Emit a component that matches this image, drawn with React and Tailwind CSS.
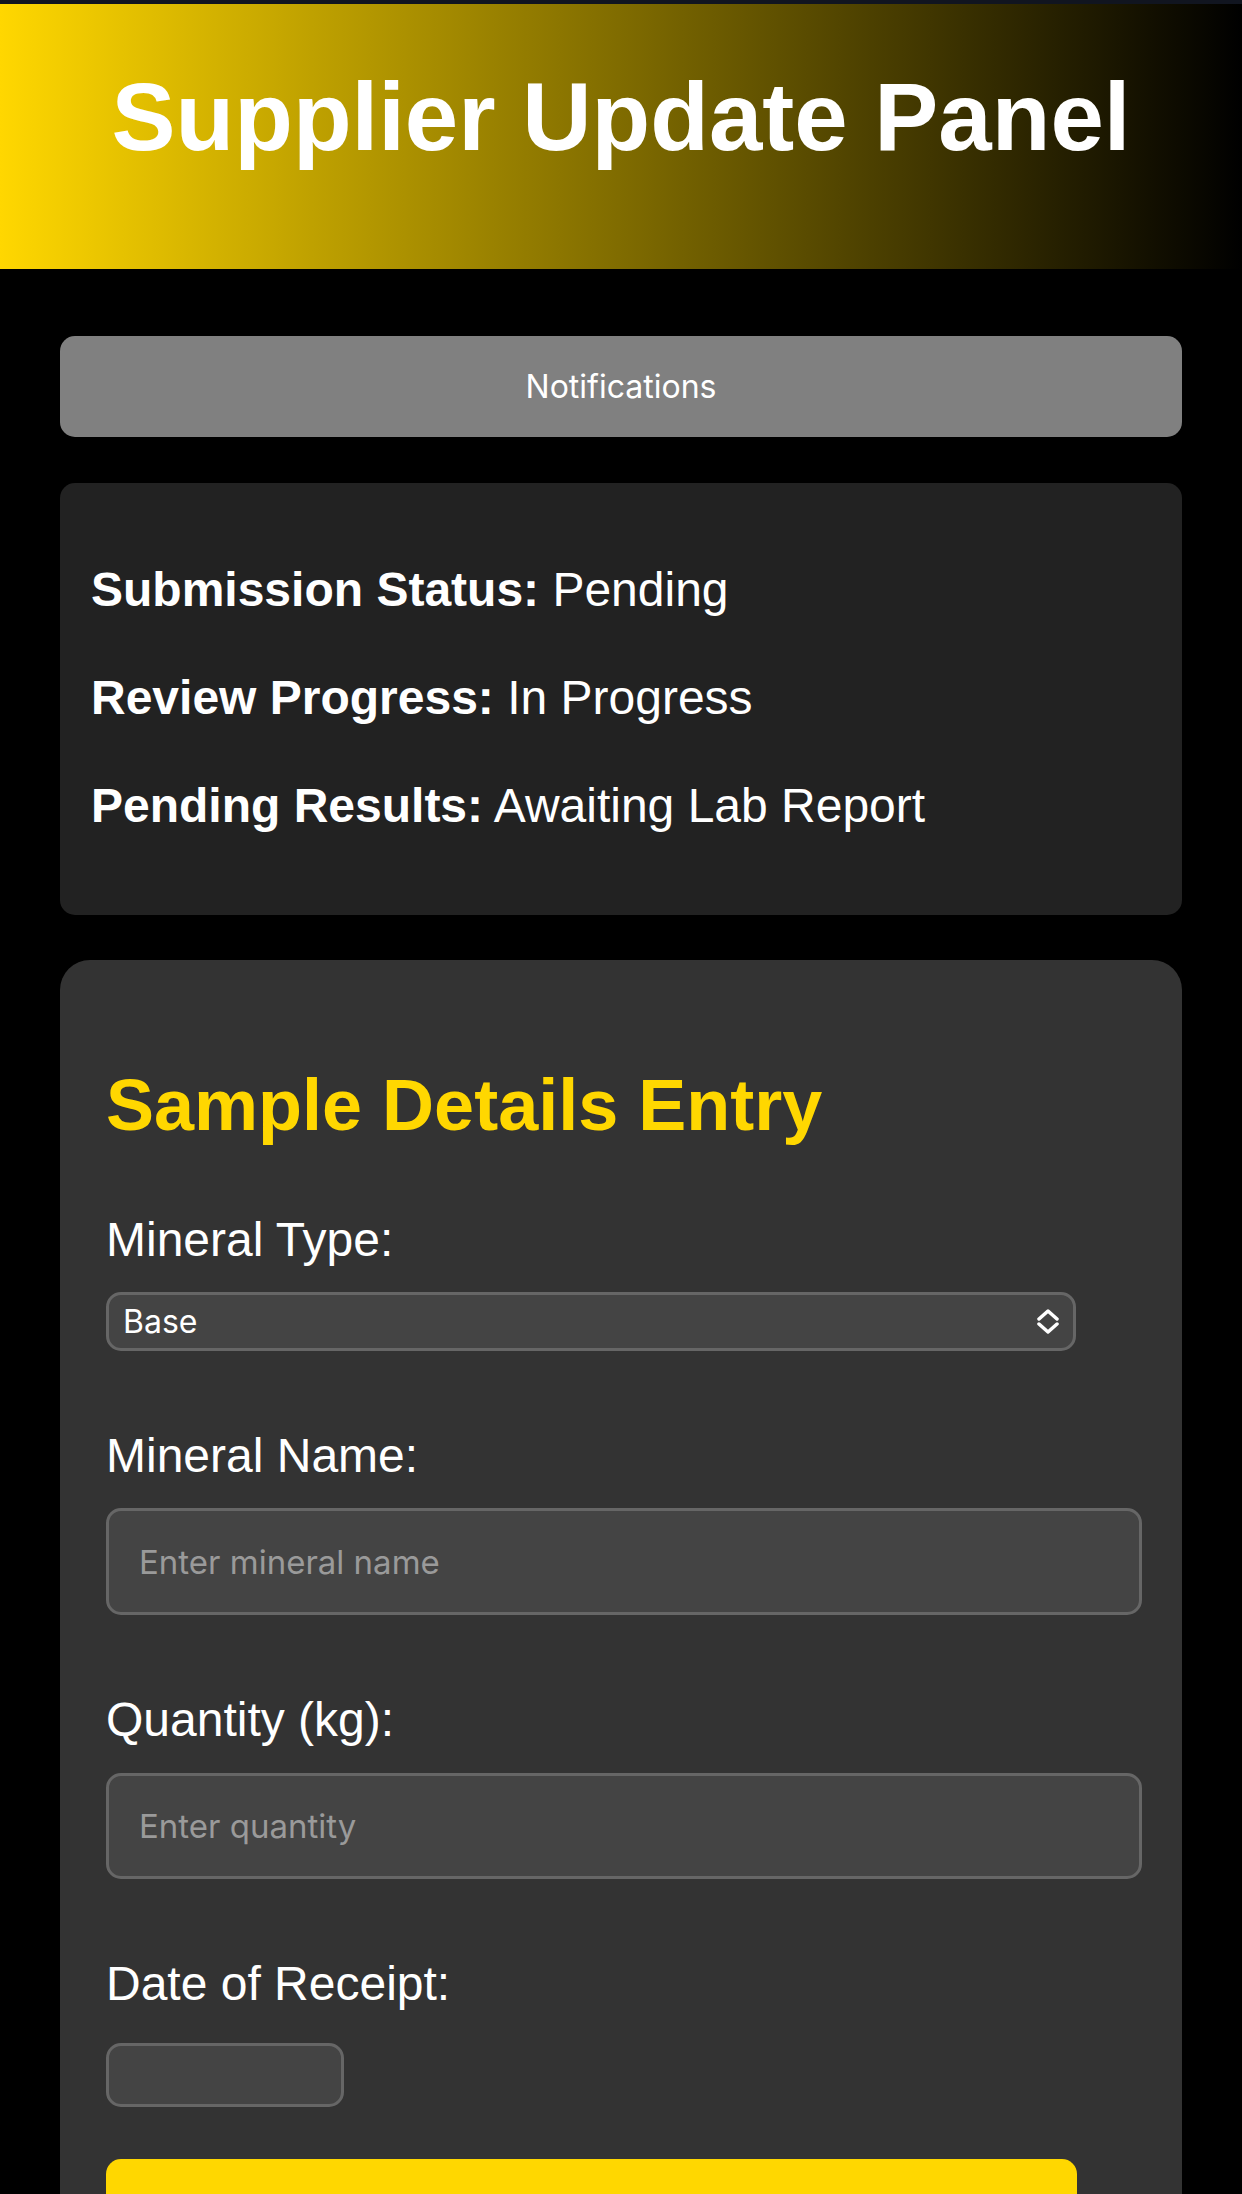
import { useState } from "react";

const arial = { fontFamily: '"Liberation Sans", Arial, sans-serif' };

function App() {
  const [type, setType] = useState("Base");
  const [name, setName] = useState("");
  const [qty, setQty] = useState("");

  return (
    <div
      className="min-h-screen bg-black text-white font-['Liberation_Sans',Arial,sans-serif]"
    >
      {/* top strip */}
      <div className="h-[4px] bg-[#111520]" />

      {/* HEADER */}
      <header className="bg-[linear-gradient(to_right,#FFD700,#000000)] pt-[58px] pb-[97px] text-center">
        <h1 className="text-[96px] leading-[110px] font-bold text-white">
          Supplier Update Panel
        </h1>
      </header>

      <main className="px-[60px] pt-[67px]">
        {/* NOTIFICATIONS */}
        <button className="w-full h-[101px] rounded-[15px] bg-[#808080] text-white text-[32px] font-['Inter',sans-serif]">
          Notifications
        </button>

        {/* STATUS */}
        <div className="mt-[46px] bg-[#222222] rounded-[15px] px-[31px] pt-[79px] pb-[82px] flex flex-col gap-[53px] text-[48px] leading-[55px]">
          <p>
            <strong>Submission Status:</strong> Pending
          </p>
          <p>
            <strong>Review Progress:</strong> In Progress
          </p>
          <p>
            <strong>Pending Results:</strong> Awaiting Lab Report
          </p>
        </div>

        {/* FORM */}
        <div className="mt-[45px] bg-[#333333] rounded-[30px] px-[46px] pt-[45px] pb-[60px]">
          <h2 className="mt-[59px] text-[72px] leading-[83px] font-bold text-[#FFD700]">
            Sample Details Entry
          </h2>

          <label className="block mt-[65px] text-[48px] leading-[55px]">
            Mineral Type:
          </label>
          <div className="relative mt-[25px] w-[970px]">
            <select
              value={type}
              onChange={(e) => setType(e.target.value)}
              className="appearance-none w-full h-[59px] rounded-[15px] border-[3px] border-[#666666] bg-[#444444] pl-[14px] text-[32px] text-white font-['Inter',sans-serif] outline-none"
            >
              <option>Base</option>
              <option>Precious</option>
              <option>Rare Earth</option>
            </select>
            <svg
              className="absolute right-[17px] top-[17px] pointer-events-none"
              width="22"
              height="25"
              viewBox="0 0 22 25"
              fill="none"
              stroke="white"
              strokeWidth="3.5"
              strokeLinecap="round"
              strokeLinejoin="round"
            >
              <path d="M2 10 L11 2 L20 10" />
              <path d="M2 15 L11 23 L20 15" />
            </svg>
          </div>

          <label className="block mt-[77px] text-[48px] leading-[55px]">
            Mineral Name:
          </label>
          <input
            value={name}
            onChange={(e) => setName(e.target.value)}
            placeholder="Enter mineral name"
            className="block mt-[25px] w-[1036px] h-[107px] rounded-[15px] border-[3px] border-[#666666] bg-[#444444] px-[30px] text-[33px] text-white placeholder:text-[#9a9a9a] font-['Inter',sans-serif] outline-none"
          />

          <label className="block mt-[77px] text-[48px] leading-[55px]">
            Quantity (kg):
          </label>
          <input
            value={qty}
            onChange={(e) => setQty(e.target.value)}
            placeholder="Enter quantity"
            className="block mt-[26px] w-[1036px] h-[106px] rounded-[15px] border-[3px] border-[#666666] bg-[#444444] px-[30px] text-[33px] text-white placeholder:text-[#9a9a9a] font-['Inter',sans-serif] outline-none"
          />

          <label className="block mt-[77px] text-[48px] leading-[55px]">
            Date of Receipt:
          </label>
          <input
            type="text"
            aria-label="Date of Receipt"
            className="block mt-[32px] w-[238px] h-[64px] rounded-[15px] border-[3px] border-[#666666] bg-[#444444] outline-none"
          />

          <button
            style={arial}
            className="block mt-[52px] w-[971px] rounded-[15px] bg-[#FFD700] pt-[70px] pb-[40px] text-[48px] leading-[55px] font-bold text-black"
          >
            Submit Sample
          </button>
        </div>
      </main>
    </div>
  );
}

export default App;
